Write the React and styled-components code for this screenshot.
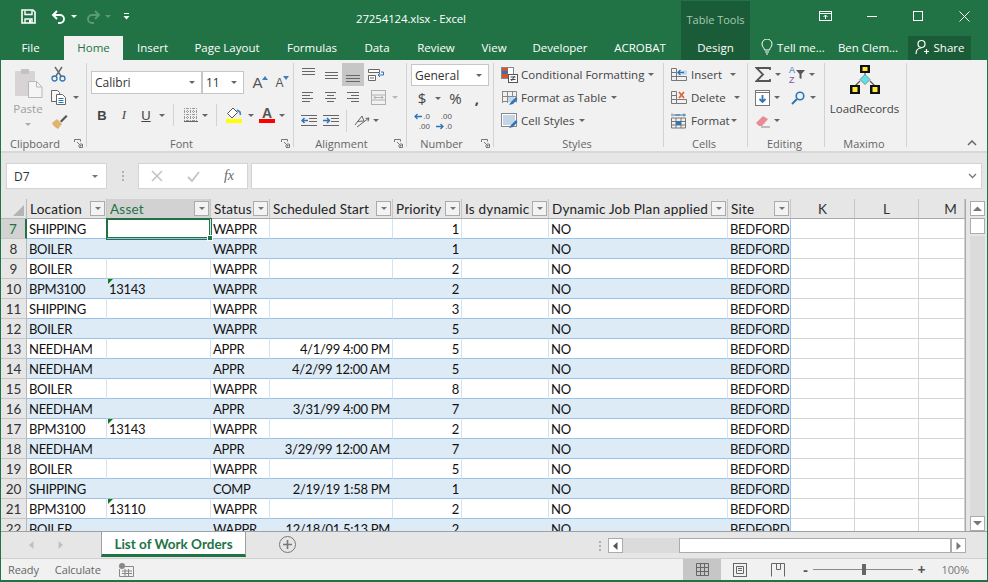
import styled, { createGlobalStyle } from "styled-components";

const GREEN = "#217346";
const COLS = "26px 80px 104px 59px 123px 69px 87px 179px 63px 64px 64px 46px";

const Global = createGlobalStyle`
  html, body { margin: 0; padding: 0; background: #e6e6e6; }
  * { box-sizing: border-box; }
`;

const Win = styled.div`
  width: 988px;
  height: 582px;
  overflow: hidden;
  display: flex;
  flex-direction: column;
  background: ${GREEN};
  border-left: 1px solid ${GREEN};
  border-right: 1px solid ${GREEN};
  border-bottom: 1px solid ${GREEN};
  font-family: "Open Sans", "Noto Sans", sans-serif;
  font-size: 11.5px;
  color: #444;
`;

/* title bar */
const TitleBar = styled.div`
  height: 36px;
  display: flex;
  color: #fff;
`;
const Qat = styled.div`
  width: 355px;
  display: flex;
  align-items: center;
  padding-left: 20px;
  padding-bottom: 3px;
  gap: 4px;
`;
const Title = styled.div`
  width: 325px;
  padding-top: 11px;
  font-size: 11.5px;
  letter-spacing: -0.15px;
`;
const ToolsLabel = styled.div`
  width: 69px;
  margin-top: 1px;
  background: #1b5c38;
  color: #a5c9b4;
  font-size: 11px;
  text-align: center;
  padding-top: 11px;
`;
const WinControls = styled.div`
  margin-left: auto;
  display: flex;
`;
const WinBtn = styled.div`
  width: 46px;
  display: flex;
  align-items: center;
  justify-content: center;
  padding-bottom: 4px;
`;

/* tabs */
const TabBar = styled.div`
  height: 24px;
  display: flex;
  color: #fff;
`;
const Tab = styled.div`
  width: ${(p) => p.$w}px;
  margin-left: ${(p) => p.$ml || 0}px;
  display: flex;
  align-items: center;
  justify-content: center;
  gap: ${(p) => p.$gap || 4}px;
  font-size: 11.5px;
  padding-bottom: 2px;
  padding-right: ${(p) => p.$pr || 0}px;
  background: ${(p) => (p.$active ? "#f1f1f1" : p.$dark ? "#1b5c38" : "transparent")};
  color: ${(p) => (p.$active ? GREEN : "#fff")};
`;

/* ribbon */
const Ribbon = styled.div`
  height: 93px;
  display: flex;
  background: #f1f1f1;
  border-bottom: 2px solid #d8d8d8;
`;
const Group = styled.div`
  width: ${(p) => p.$w}px;
  flex: none;
  display: flex;
  flex-direction: column;
  margin: 3px 0 4px;
  border-right: 1px solid ${(p) => (p.$last ? "transparent" : "#d2d2d2")};
`;
const GroupBody = styled.div`
  height: 73px;
  flex: none;
  display: flex;
  padding-left: ${(p) => p.$pl || 0}px;
  gap: ${(p) => p.$gap || 0}px;
`;
const GroupLabel = styled.div`
  height: 14px;
  flex: none;
  display: flex;
  align-items: center;
  padding-right: 3px;
  color: #666;
  font-size: 11px;
  span { flex: 1; text-align: center; margin-right: ${(p) => (p.$launcher ? 5 : 0)}px; }
`;
const Stack = styled.div`
  width: ${(p) => (p.$w ? `${p.$w}px` : "auto")};
  display: flex;
  flex-direction: column;
  justify-content: ${(p) => p.$justify || "flex-start"};
  align-items: ${(p) => p.$align || "flex-start"};
  gap: ${(p) => p.$gap || 0}px;
  padding-top: ${(p) => p.$pt || 0}px;
`;
const Row = styled.div`
  height: ${(p) => p.$h || 23}px;
  display: flex;
  align-items: center;
  margin-top: ${(p) => p.$mt || 0}px;
  margin-left: ${(p) => p.$ml || 0}px;
`;
const Btn = styled.div`
  width: ${(p) => p.$w || 22}px;
  height: ${(p) => p.$h || 23}px;
  margin-left: ${(p) => p.$ml || 0}px;
  flex: none;
  display: flex;
  align-items: center;
  justify-content: center;
  background: ${(p) => (p.$on ? "#c6c6c6" : "transparent")};
`;
const Caret = styled.i`
  display: block;
  flex: none;
  margin-left: ${(p) => p.$ml || 0}px;
  margin-right: ${(p) => p.$mr || 0}px;
  border-left: 3px solid transparent;
  border-right: 3px solid transparent;
  border-top: 3px solid ${(p) => p.$c || "#666"};
`;
const VSep = styled.div`
  width: 1px;
  height: 22px;
  flex: none;
  margin: 0 ${(p) => p.$m || 5}px;
  background: #d2d2d2;
`;
const Combo = styled.div`
  width: ${(p) => p.$w}px;
  height: ${(p) => p.$h || 23}px;
  flex: none;
  margin-right: ${(p) => p.$mr || 0}px;
  display: flex;
  align-items: center;
  justify-content: space-between;
  padding: 0 6px 0 3px;
  background: #fff;
  border: 1px solid #c6c6c6;
  font-size: 12px;
  color: #333;
`;
const TextBtn = styled.div`
  display: flex;
  align-items: center;
  height: 23px;
  white-space: nowrap;
  color: #444;
  gap: 3px;
`;
const Glyph = styled.span`
  display: block;
  font-size: ${(p) => p.$s || 12}px;
  line-height: ${(p) => (p.$lh ? `${p.$lh}px` : "normal")};
  font-weight: ${(p) => (p.$b ? 700 : 400)};
  font-style: ${(p) => (p.$i ? "italic" : "normal")};
  text-decoration: ${(p) => (p.$u ? "underline" : "none")};
  color: ${(p) => p.$c || "#444"};
  font-family: ${(p) => p.$f || "inherit"};
`;
const GrowMark = styled.div`
  align-self: flex-start;
  margin: 5px 0 0 -1px;
`;
const ColorSwatch = styled.div`
  display: flex;
  flex-direction: column;
  align-items: center;
  width: 16px;
`;
const ColorBar = styled.div`
  width: 16px;
  height: 4px;
  background: ${(p) => p.$c};
`;
const DecWrap = styled.div`
  display: flex;
  flex-direction: column;
  align-items: flex-end;
  gap: 1px;
  font-family: "Liberation Sans", sans-serif;
  font-size: 8px;
  color: #555;
`;
const DecLine = styled.div`
  display: flex;
  align-items: center;
  height: 9px;
  line-height: 9px;
  gap: 1px;
`;
const SortLetters = styled.div`
  display: flex;
  flex-direction: column;
  font-family: "Liberation Sans", sans-serif;
  font-size: 9px;
  line-height: 10px;
  margin-right: 1px;
`;
const SortLetter = styled.span`
  color: ${(p) => p.$c};
`;
const PasteLabel = styled.div`
  color: #a0a0a0;
  margin-top: 3px;
  margin-bottom: 7px;
`;
const BigLabel = styled.div`
  color: #444;
  margin-top: 5px;
`;
const CollapseSlot = styled.div`
  flex: 1;
  display: flex;
  align-items: flex-end;
  justify-content: flex-end;
  padding: 0 10px 5px 0;
`;

/* formula bar */
const FormulaBar = styled.div`
  height: 46px;
  display: flex;
  align-items: flex-start;
  padding: 10px 5px 0 5px;
  background: #e6e6e6;
`;
const NameBox = styled.div`
  width: 101px;
  height: 26px;
  display: flex;
  align-items: center;
  justify-content: space-between;
  padding: 0 8px 0 7px;
  background: #fff;
  border: 1px solid #d4d4d4;
  color: #333;
  font-size: 12px;
`;
const Dots = styled.div`
  width: 31px;
  height: 26px;
  display: flex;
  flex-direction: column;
  align-items: center;
  justify-content: center;
  gap: 2px;
  i { width: 2px; height: 2px; background: #b0b0b0; display: block; }
`;
const FxBox = styled.div`
  width: 110px;
  height: 26px;
  display: flex;
  align-items: center;
  background: #fff;
  border: 1px solid #d4d4d4;
  margin-right: 3px;
`;
const FxBtn = styled.div`
  width: 36px;
  display: flex;
  justify-content: center;
  color: #666;
`;
const FormulaInput = styled.div`
  flex: 1;
  height: 26px;
  display: flex;
  align-items: center;
  justify-content: flex-end;
  padding-right: 4px;
  background: #fff;
  border: 1px solid #d4d4d4;
`;

/* sheet */
const SheetArea = styled.div`
  height: 332px;
  display: flex;
  background: #e6e6e6;
`;
const Sheet = styled.div`
  width: 964px;
  overflow: hidden;
  font-family: Lato, "Liberation Sans", sans-serif;
  font-size: 13px;
  letter-spacing: -0.3px;
  color: #111;
  flex: none;
`;
const SheetRow = styled.div`
  display: grid;
  grid-template-columns: ${COLS};
  height: 20px;
`;
const Corner = styled.div`
  background: #e6e6e6;
  border-right: 1px solid #b8b8b8;
  border-bottom: 1px solid #b8b8b8;
  display: flex;
  align-items: flex-end;
  justify-content: flex-end;
  padding: 0 2px 2px 0;
`;
const HeadCell = styled.div`
  display: flex;
  align-items: center;
  justify-content: ${(p) => (p.$plain ? "center" : "space-between")};
  padding: ${(p) => (p.$plain ? `0 0 0 ${p.$pl || 0}px` : "0 1px 0 3px")};
  background: ${(p) => (p.$sel ? "#d2d2d2" : "#e6e6e6")};
  color: ${(p) => (p.$sel ? GREEN : p.$plain ? "#333" : "#222")};
  border-right: 1px solid #c6c6c6;
  border-bottom: 1px solid #a8a8a8;
  font-size: 13.5px;
  letter-spacing: 0.2px;
  white-space: nowrap;
  overflow: hidden;
`;
const Filter = styled.div`
  width: 15px;
  height: 15px;
  flex: none;
  display: flex;
  align-items: center;
  justify-content: center;
  background: #f3f3f3;
  border: 1px solid #ababab;
`;
const RowHead = styled.div`
  display: flex;
  align-items: center;
  justify-content: center;
  background: ${(p) => (p.$sel ? "#d2d2d2" : "#e6e6e6")};
  color: ${(p) => (p.$sel ? GREEN : "#333")};
  border-right: ${(p) => (p.$sel ? `2px solid ${GREEN}` : "1px solid #b8b8b8")};
  border-bottom: 1px solid #c6c6c6;
  font-size: 13.5px;
  letter-spacing: 0;
`;
const Cell = styled.div`
  position: relative;
  z-index: ${(p) => (p.$sel ? 1 : "auto")};
  display: flex;
  align-items: center;
  justify-content: ${(p) => (p.$right ? "flex-end" : "flex-start")};
  padding: 1px 2px 0 2px;
  white-space: nowrap;
  background: ${(p) => (p.$band ? "#ddebf7" : "#fff")};
  border-bottom: 1px solid #9bc2e6;
  border-right: 1px solid ${(p) => (p.$band && !p.$edge ? "#ddebf7" : p.$edge ? "#9bc2e6" : "#d4e3f1")};
  box-shadow: ${(p) => (p.$sel ? `0 0 0 1px ${GREEN}, inset 0 0 0 1px ${GREEN}` : "none")};
  ${(p) => p.$note && `
    &::before {
      content: "";
      position: absolute;
      left: 1px;
      top: 0;
      border-top: 5px solid #107c10;
      border-right: 5px solid transparent;
    }
  `}
`;
const Handle = styled.div`
  position: absolute;
  right: -3px;
  bottom: -3px;
  width: 6px;
  height: 6px;
  background: ${GREEN};
  border: 1px solid #fff;
`;
const Blank = styled.div`
  background: #fff;
  border-right: 1px solid #d4d4d4;
  border-bottom: 1px solid #d4d4d4;
`;
const VScroll = styled.div`
  flex: 1;
  display: flex;
  flex-direction: column;
  align-items: center;
  padding: 2px 0 0 1px;
  border-left: 1px solid #a8a8a8;
  background: #e6e6e6;
`;
const VTrack = styled.div`
  flex: 1;
  width: 15px;
  margin-top: 2px;
  background: #dbdbdb;
`;
const ScrollBtn = styled.div`
  width: ${(p) => p.$w || 15}px;
  height: ${(p) => p.$h || 15}px;
  flex: none;
  margin-top: ${(p) => p.$mt || 0}px;
  display: flex;
  align-items: center;
  justify-content: center;
  background: #fff;
  border: 1px solid #ababab;
`;

/* sheet tabs */
const SheetBar = styled.div`
  height: 28px;
  display: flex;
  align-items: flex-start;
  background: #e6e6e6;
  border-top: 1px solid #a0a0a0;
  border-bottom: 1px solid #d0d0d0;
`;
const NavArrows = styled.div`
  width: 100px;
  height: 26px;
  display: flex;
  align-items: center;
  padding-left: 27px;
  gap: 22px;
`;
const SheetTab = styled.div`
  width: 145px;
  height: 25px;
  display: flex;
  align-items: center;
  justify-content: center;
  padding-top: 2px;
  background: #fff;
  color: ${GREEN};
  font-family: Lato, "Liberation Sans", sans-serif;
  font-weight: 700;
  font-size: 13.5px;
  border-left: 1px solid #a0a0a0;
  border-right: 1px solid #a0a0a0;
  border-bottom: 3px solid ${GREEN};
`;
const AddSheet = styled.div`
  width: 17px;
  height: 17px;
  margin: 4px 0 0 33px;
  border: 1.5px solid #777;
  border-radius: 50%;
  display: flex;
  align-items: center;
  justify-content: center;
`;
const HScroll = styled.div`
  margin-left: auto;
  margin-right: 21px;
  display: flex;
  align-items: center;
  height: 26px;
  padding-top: 1px;
`;
const GripDots = styled(Dots)`
  width: 16px;
`;
const HTrack = styled.div`
  width: 56px;
  height: 15px;
  background: #dbdbdb;
`;
const HThumb = styled.div`
  width: 272px;
  height: 15px;
  background: #fff;
  border: 1px solid #ababab;
`;

/* status bar */
const StatusBar = styled.div`
  height: 21px;
  display: flex;
  align-items: center;
  padding-left: 7px;
  background: #f1f1f1;
  color: #666;
  font-size: 11px;
  letter-spacing: -0.1px;
  gap: 16px;
`;
const StatusRight = styled.div`
  margin-left: auto;
  height: 100%;
  display: flex;
  align-items: center;
  padding-right: 18px;
`;
const ViewBtn = styled.div`
  width: 38px;
  height: 100%;
  display: flex;
  align-items: center;
  justify-content: center;
  background: ${(p) => (p.$on ? "#c6c6c6" : "transparent")};
`;
const ZoomSlider = styled.div`
  position: relative;
  width: 100px;
  height: 1px;
  margin: 0 4px;
  background: #8a8a8a;
  &::after {
    content: "";
    position: absolute;
    left: 49px;
    top: -5px;
    width: 4px;
    height: 11px;
    background: #666;
  }
`;
const ZoomMark = styled.div`
  width: 8px;
  text-align: center;
  font-weight: 700;
  color: #555;
  font-size: 14px;
  line-height: 14px;
  margin-left: ${(p) => p.$ml || 0}px;
`;
const ZoomPct = styled.div`
  margin-left: 16px;
  color: #777;
`;

/* icons */
const Ico = ({ w = 16, h = 16, children }) => (
  <svg width={w} height={h} viewBox={`0 0 ${w} ${h}`} fill="none" style={{ display: "block", flex: "none" }}>
    {children}
  </svg>
);

const Lines = ({ rows, c = "#666", w = 16, h = 16 }) => (
  <Ico w={w} h={h}>
    {rows.map(([x1, x2, y], i) => (
      <path key={i} d={`M${x1} ${y + 0.5}H${x2}`} stroke={c} />
    ))}
  </Ico>
);

const SaveIcon = () => (
  <Ico w={15} h={15}>
    <path d="M1 1h11l2 2v11H1z" stroke="#fff" strokeWidth="1.6" />
    <path d="M4 1.5v4h7v-4" stroke="#fff" strokeWidth="1.4" />
    <path d="M4 14v-4h7v4" stroke="#fff" strokeWidth="1.4" />
    <rect x="8" y="11" width="2" height="3" fill="#fff" />
  </Ico>
);
const UndoIcon = ({ flip, c = "#fff" }) => (
  <Ico w={16} h={14}>
    <g transform={flip ? "matrix(-1 0 0 1 16 0)" : undefined}>
      <path d="M6 1L2 5l4 4M2 5h7a4 4 0 0 1 0 8H7" stroke={c} strokeWidth="1.9" />
    </g>
  </Ico>
);
const QatMore = () => (
  <Ico w={7} h={7}>
    <path d="M1 .5h5" stroke="#fff" />
    <path d="M0.5 3h6L3.5 6.5z" fill="#fff" />
  </Ico>
);
const RestoreRibbon = () => (
  <Ico w={14} h={11}>
    <rect x=".5" y=".5" width="12" height="9" stroke="#fff" />
    <path d="M.5 2.5h12" stroke="#fff" />
    <path d="M6.5 8V4M4.5 6l2-2 2 2" stroke="#fff" />
  </Ico>
);
const MinIcon = () => <Ico w={10} h={10}><path d="M0 5.5h10" stroke="#fff" /></Ico>;
const MaxIcon = () => <Ico w={10} h={10}><rect x=".5" y=".5" width="9" height="9" stroke="#fff" /></Ico>;
const CloseIcon = () => <Ico w={11} h={11}><path d="M.5.5l10 10M10.5.5l-10 10" stroke="#fff" /></Ico>;
const BulbIcon = () => (
  <Ico w={12} h={16}>
    <path d="M3.5 11c0-2-2.5-3-2.5-6a5 5 0 0 1 10 0c0 3-2.5 4-2.5 6z" stroke="#fff" />
    <path d="M4 13h4M5 15h2" stroke="#fff" />
  </Ico>
);
const PersonIcon = () => (
  <Ico w={15} h={16}>
    <circle cx="6.5" cy="5" r="3.5" stroke="#fff" strokeWidth="1.2" />
    <path d="M1 15c0-3.5 2-6 5.5-6M11.5 10v5M9 12.5h5" stroke="#fff" strokeWidth="1.2" />
  </Ico>
);
const PasteIcon = () => (
  <Ico w={29} h={30}>
    <rect x="1" y="3" width="20" height="25" rx="1" fill="#d8d4d6" />
    <rect x="7" y="1" width="8" height="5" fill="#c6c2c4" />
    <path d="M14.5 13.5h8l5.5 5.5v10.5h-13.5z" fill="#f5f5f5" stroke="#b8b8b8" />
    <path d="M22.5 13.5v5.5h5.5" stroke="#b8b8b8" />
  </Ico>
);
const CutIcon = () => (
  <Ico w={15} h={16}>
    <path d="M4 1l6 9M11 1L5 10" stroke="#666" strokeWidth="1.4" />
    <circle cx="3.5" cy="12.5" r="2.5" stroke="#2f75b5" strokeWidth="1.3" />
    <circle cx="11.5" cy="12.5" r="2.5" stroke="#2f75b5" strokeWidth="1.3" />
  </Ico>
);
const CopyIcon = () => (
  <Ico w={15} h={15}>
    <path d="M.5.5h6l2 2v9h-8z" fill="#f8f8f8" stroke="#666" />
    <path d="M5.5 4.5h6l3 3v7h-9z" fill="#fff" stroke="#666" />
    <path d="M7.5 8.5h5M7.5 10.5h5M7.5 12.5h5" stroke="#2f75b5" />
  </Ico>
);
const BrushIcon = () => (
  <Ico w={17} h={16}>
    <path d="M9 8L15 2l1.5 1.5-6 6z" fill="#555" />
    <path d="M1 10l5-4 5 5-4 5C5 15 2 13 1 10z" fill="#e2b36e" />
  </Ico>
);
const GrowTri = ({ up }) => (
  <Ico w={6} h={4}>
    <path d={up ? "M0 4l3-4 3 4z" : "M0 0h6L3 4z"} fill="#3f7fbf" />
  </Ico>
);
const BorderIcon = () => (
  <Ico w={14} h={14}>
    {[0, 3, 6, 9, 12].map((v) => (
      <path key={v} d={`M${v + 0.5} 0v13M0 ${v + 0.5}h13`} stroke="#999" strokeDasharray="1 1" />
    ))}
    <path d="M0 13.5h14" stroke="#666" />
  </Ico>
);
const FillIcon = () => (
  <Ico w={17} h={16}>
    <path d="M7 1L1.5 6.5 6 11l5.5-5.5z" fill="#fff" stroke="#555" />
    <path d="M11 3l3 2 .5 3" stroke="#3f7fbf" strokeWidth="1.6" />
    <rect x="0" y="12" width="16" height="4" fill="#ffff00" />
  </Ico>
);
const WrapIcon = () => (
  <Ico w={17} h={16}>
    <path d="M.5 2.5h11v3h-11zM.5 8.5h7v5h-7z" fill="#fff" stroke="#666" />
    <path d="M13 5h2.5v3H10M12 6l-2 2 2 2" stroke="#2f75b5" />
    <path d="M2 11h4" stroke="#666" />
  </Ico>
);
const MergeIcon = () => (
  <Ico w={15} h={15}>
    <rect x=".5" y=".5" width="14" height="14" stroke="#b0b0b0" />
    <path d="M.5 5h14M.5 10h14M3 7.500h9M3 7.500l1.500-1.500M3 7.500l1.500 1.500M12 7.500l-1.500-1.500M12 7.500l-1.500 1.500" stroke="#b0b0b0" />
  </Ico>
);
const IndentIcon = ({ right }) => (
  <Ico w={16} h={12}>
    <path d="M0 .5h16M8 3.500h8M8 6.500h8M0 10.500h16" stroke="#666" />
    <path d={right ? "M0 5.500h6M4 3l2.500 2.500L4 8" : "M7 5.500H1M3.500 3L1 5.500 3.500 8"} stroke="#2f75b5" strokeWidth="1.5" />
  </Ico>
);
const OrientIcon = () => (
  <Ico w={16} h={16}>
    <path d="M1 12L8 3l2 5-7 .5M3 14L15 5M15 5l-3.500.5M15 5l-1 3.500" stroke="#666" />
  </Ico>
);
const DecArrow = ({ right }) => (
  <Ico w={8} h={7}>
    <path d={right ? "M0 3.500h7M4.500 1L7 3.500 4.500 6" : "M8 3.500H1M3.500 1L1 3.500 3.500 6"} stroke="#2f75b5" strokeWidth="1.3" />
  </Ico>
);
const DecLess = () => (
  <DecWrap>
    <DecLine><DecArrow />.0</DecLine>
    <DecLine>.00</DecLine>
  </DecWrap>
);
const DecMore = () => (
  <DecWrap>
    <DecLine>.00</DecLine>
    <DecLine><DecArrow right />.0</DecLine>
  </DecWrap>
);
const TableGrid = ({ accent }) => (
  <>
    {[1, 6, 11].map((v) => (
      <path key={v} d={`M${v + 0.5} 1v12M1 ${v + 0.5}h14`} stroke="#888" />
    ))}
    <path d="M1.500 1.500h14v11" stroke="#888" />
    {accent}
  </>
);
const CondIcon = () => (
  <Ico w={17} h={16}>
    <rect x=".5" y=".5" width="12" height="11" fill="#fff" stroke="#888" />
    <rect x="1" y="1" width="6" height="3" fill="#d9542b" />
    <rect x="1" y="4" width="6" height="3" fill="#2f75b5" />
    <rect x="1" y="7" width="6" height="4" fill="#d9542b" />
    <rect x="7.500" y="7.500" width="9" height="8" fill="#fff" stroke="#555" />
    <path d="M9.500 10h5M9.500 12.500h5M13.500 9l-3 5" stroke="#444" />
  </Ico>
);
const FormatTableIcon = () => (
  <Ico w={17} h={16}>
    <TableGrid accent={<rect x="7" y="7" width="6" height="5" fill="#bdd7ee" />} />
    <path d="M15 7l-5 5-2 3 4-1 4.500-5z" fill="#2f75b5" />
  </Ico>
);
const CellStyleIcon = () => (
  <Ico w={17} h={16}>
    <rect x=".5" y=".5" width="15" height="13" fill="#fff" stroke="#888" />
    <rect x="2" y="2" width="12" height="10" fill="#c3d6e8" />
    <path d="M15 7l-5 5-2 3 4-1 4.500-5z" fill="#2f75b5" />
  </Ico>
);
const CellsIcon = ({ kind }) => (
  <Ico w={17} h={16}>
    <path d="M.5 1.500h5v4h-5zM.5 5.500h5v4h-5zM.5 9.500h5v4h-5zM5.500 9.500h10v4h-10z" stroke="#777" />
    {kind === "insert" && <rect x="11" y="3.500" width="5" height="4" fill="#bdd7ee" />}
    {kind === "insert" && <path d="M13 5.500H7M9.500 3L7 5.500 9.500 8" stroke="#2f75b5" strokeWidth="1.5" />}
    {kind === "delete" && <path d="M8 2l5 6M13 2L8 8" stroke="#e0603a" strokeWidth="1.7" />}
  </Ico>
);
const FormatIcon = () => (
  <Ico w={17} h={16}>
    <path d="M1 .5v3M4.500 2H9M13 .5v3M.5 5h14v10h-14zM.5 8.500h14M.5 12h14M5 5v10M10 5v10" stroke="#777" />
    <rect x="5" y="8" width="5" height="4" fill="#2f75b5" />
    <path d="M2 2h13" stroke="#2f75b5" />
  </Ico>
);
const SigmaIcon = () => (
  <Ico w={16} h={15}>
    <path d="M15 3V1H1.500L8 7.500 1.500 14H15v-2" stroke="#555" strokeWidth="1.8" />
  </Ico>
);
const FunnelIcon = () => (
  <Ico w={9} h={9}>
    <path d="M0 0h9L5.500 4v5l-2-1V4z" fill="#555" />
  </Ico>
);
const FillDownIcon = () => (
  <Ico w={15} h={16}>
    <rect x=".5" y=".5" width="14" height="15" fill="#fff" stroke="#777" />
    <path d="M.5 2.500h14" stroke="#777" />
    <path d="M7.500 5v7M4.500 9l3 3 3-3" stroke="#2f75b5" strokeWidth="1.8" />
  </Ico>
);
const FindIcon = () => (
  <Ico w={14} h={14}>
    <circle cx="9" cy="5" r="3.800" stroke="#2f75b5" strokeWidth="1.6" />
    <path d="M6 8l-5 5" stroke="#2f75b5" strokeWidth="2" />
  </Ico>
);
const EraserIcon = () => (
  <Ico w={16} h={14}>
    <path d="M1 9l7-7 5 3-6 7H4z" fill="#e98a95" />
    <path d="M6 13h9" stroke="#888" />
  </Ico>
);
const FlowIcon = () => (
  <Ico w={32} h={32}>
    <path d="M16 9v5M11 17l-5 5M21 17l5 5" stroke="#555" strokeWidth="1.2" />
    <rect x="11" y="1" width="10" height="8" fill="#111" />
    <rect x="13.500" y="3" width="5" height="4" fill="#ffeb3b" />
    <rect x="1" y="21" width="10" height="9" fill="#111" />
    <rect x="3.500" y="23" width="5" height="5" fill="#ffeb3b" />
    <rect x="21" y="21" width="10" height="9" fill="#111" />
    <rect x="23.500" y="23" width="5" height="5" fill="#ffeb3b" />
    <path d="M16 10.500l5 5-5 5-5-5z" fill="#5ce3ea" stroke="#7a8c8c" />
  </Ico>
);
const Launcher = () => (
  <Ico w={9} h={9}>
    <path d="M8.500 5v3.500H5M.5 3V.5h6v2" stroke="#777" />
    <path d="M3 3l4 4M4 7h3V4" stroke="#777" />
  </Ico>
);
const CollapseIcon = () => <Ico w={10} h={6}><path d="M1 5l4-4 4 4" stroke="#666" strokeWidth="1.5" /></Ico>;
const Chevron = () => <Ico w={9} h={6}><path d="M1 1l3.500 3.500L8 1" stroke="#777" strokeWidth="1.3" /></Ico>;
const XMark = () => <Ico w={12} h={12}><path d="M1 1l10 10M11 1L1 11" stroke="#c4c4c4" strokeWidth="1.6" /></Ico>;
const CheckMark = () => <Ico w={13} h={11}><path d="M1 6l4 4 7-9" stroke="#c4c4c4" strokeWidth="1.8" /></Ico>;
const CornerTri = () => <Ico w={11} h={11}><path d="M11 0v11H0z" fill="#b4b4b4" /></Ico>;
const Arrow = ({ dir, c = "#555" }) => (
  <Ico w={7} h={8}>
    <path d={dir === "left" ? "M5.500 0v8L1 4z" : "M1.500 0v8L6 4z"} fill={c} />
  </Ico>
);
const ArrowV = ({ up }) => (
  <Ico w={9} h={5}>
    <path d={up ? "M0 5l4.500-4.500L9 5z" : "M0 0l4.500 4.500L9 0z"} fill="#777" />
  </Ico>
);
const PlusIcon = () => <Ico w={9} h={9}><path d="M4.500 0v9M0 4.500h9" stroke="#777" strokeWidth="1.6" /></Ico>;
const MacroIcon = () => (
  <Ico w={15} h={14}>
    <circle cx="3" cy="3" r="3" fill="#888" />
    <path d="M5 3.500h9.500v10H.5V6" stroke="#888" />
    <path d="M3 8h10M3 10.500h10M6 6v7M9.500 6v7" stroke="#888" />
  </Ico>
);
const NormalView = () => (
  <Ico w={13} h={13}>
    <path d="M.5.5h12v12H.5zM.5 4.500h12M.5 8.500h12M4.500.5v12M8.500.5v12" stroke="#666" />
  </Ico>
);
const PageView = () => (
  <Ico w={14} h={14}>
    <rect x=".5" y=".5" width="13" height="13" stroke="#666" />
    <path d="M3.500 3.500h7v7h-7zM5 5.500h4M5 7.500h4" stroke="#666" />
  </Ico>
);
const BreakView = () => (
  <Ico w={14} h={14}>
    <path d="M.5 13.500V.5h13v13M5.500.5v6h4V.5" stroke="#666" />
  </Ico>
);

const RULES = [
  ["SHIPPING", "", "WAPPR", "", 1],
  ["BOILER", "", "WAPPR", "", 1],
  ["BOILER", "", "WAPPR", "", 2],
  ["BPM3100", "13143", "WAPPR", "", 2],
  ["SHIPPING", "", "WAPPR", "", 3],
  ["BOILER", "", "WAPPR", "", 5],
  ["NEEDHAM", "", "APPR", "4/1/99 4:00 PM", 5],
  ["NEEDHAM", "", "APPR", "4/2/99 12:00 AM", 5],
  ["BOILER", "", "WAPPR", "", 8],
  ["NEEDHAM", "", "APPR", "3/31/99 4:00 PM", 7],
  ["BPM3100", "13143", "WAPPR", "", 2],
  ["NEEDHAM", "", "APPR", "3/29/99 12:00 AM", 7],
  ["BOILER", "", "WAPPR", "", 5],
  ["SHIPPING", "", "COMP", "2/19/19 1:58 PM", 1],
  ["BPM3100", "13110", "WAPPR", "", 2],
  ["BOILER", "", "WAPPR", "12/18/01 5:13 PM", 2],
];

const HEADERS = ["Location", "Asset", "Status", "Scheduled Start", "Priority", "Is dynamic", "Dynamic Job Plan applied", "Site"];

const left = [[1, 12, 2], [1, 9, 5], [1, 12, 8], [1, 9, 11]];
const center = [[2, 13, 2], [4, 11, 5], [2, 13, 8], [4, 11, 11]];
const rightA = [[2, 14, 2], [6, 14, 5], [2, 14, 8], [6, 14, 11]];
const top = [[1, 14, 1], [1, 14, 4], [1, 14, 7]];
const mid = [[2, 15, 5], [2, 15, 8], [2, 15, 11]];
const bot = [[1, 15, 8], [1, 15, 11], [1, 15, 14]];

function App() {
  return (
    <Win>
      <Global />
      <TitleBar>
        <Qat>
          <SaveIcon />
          <Btn $w={7} />
          <UndoIcon />
          <Caret $c="#fff" $mr={4} />
          <UndoIcon flip c="#5d9a78" />
          <Caret $c="#5d9a78" $mr={8} />
          <QatMore />
        </Qat>
        <Title>27254124.xlsx - Excel</Title>
        <ToolsLabel>Table Tools</ToolsLabel>
        <WinControls>
          <WinBtn><RestoreRibbon /></WinBtn>
          <WinBtn><MinIcon /></WinBtn>
          <WinBtn><MaxIcon /></WinBtn>
          <WinBtn><CloseIcon /></WinBtn>
        </WinControls>
      </TitleBar>

      <TabBar>
        <Tab $w={63} $pr={4}>File</Tab>
        <Tab $w={59} $active>Home</Tab>
        <Tab $w={59}>Insert</Tab>
        <Tab $w={90}>Page Layout</Tab>
        <Tab $w={80}>Formulas</Tab>
        <Tab $w={50}>Data</Tab>
        <Tab $w={68}>Review</Tab>
        <Tab $w={48}>View</Tab>
        <Tab $w={84}>Developer</Tab>
        <Tab $w={76}>ACROBAT</Tab>
        <Tab $w={69} $ml={3} $dark>Design</Tab>
        <Tab $w={76} $ml={5}><BulbIcon />Tell me...</Tab>
        <Tab $w={74}>Ben Clem...</Tab>
        <Tab $w={63} $ml={3} $dark>
          <PersonIcon />
          Share
        </Tab>
      </TabBar>

      <Ribbon>
        <Group $w={86}>
          <GroupBody $pl={12}>
            <Stack $w={30} $align="center" $pt={5}>
              <PasteIcon />
              <PasteLabel>Paste</PasteLabel>
              <Caret $c="#aaa" />
            </Stack>
            <Stack $pt={2} $gap={7}>
              <Row $h={17} $ml={8}><CutIcon /></Row>
              <Row $h={16} $ml={8}><CopyIcon /><Caret $ml={7} /></Row>
              <Row $h={17} $ml={8}><BrushIcon /></Row>
            </Stack>
          </GroupBody>
          <GroupLabel $launcher><span>Clipboard</span><Launcher /></GroupLabel>
        </Group>

        <Group $w={207}>
          <GroupBody $pl={4}>
            <Stack $pt={8}>
              <Row>
                <Combo $w={111}>Calibri<Caret /></Combo>
                <Combo $w={42} $mr={5}>11<Caret /></Combo>
                <Btn $w={22}>
                  <Glyph $s={15} $c="#555" $f='"Liberation Sans", sans-serif'>A</Glyph>
                  <GrowMark><GrowTri up /></GrowMark>
                </Btn>
                <Btn $w={22}>
                  <Glyph $s={12} $c="#555" $f='"Liberation Sans", sans-serif'>A</Glyph>
                  <GrowMark><GrowTri /></GrowMark>
                </Btn>
              </Row>
              <Row $h={22} $mt={10}>
                <Btn $w={22}><Glyph $b $s={13} $f='"Liberation Sans", sans-serif'>B</Glyph></Btn>
                <Btn $w={22}><Glyph $i $s={13} $f='"Liberation Serif", serif'>I</Glyph></Btn>
                <Btn $w={22}><Glyph $u $s={13} $f='"Liberation Sans", sans-serif'>U</Glyph></Btn>
                <Caret $ml={2} />
                <VSep $m={8} />
                <Btn $w={18}><BorderIcon /></Btn>
                <Caret $ml={2} />
                <VSep $m={8} />
                <Btn $w={18}><FillIcon /></Btn>
                <Caret $ml={5} />
                <Btn $w={20} $ml={3}>
                  <ColorSwatch>
                    <Glyph $b $s={14} $lh={12} $c="#555" $f='"Liberation Sans", sans-serif'>A</Glyph>
                    <ColorBar $c="#f00" />
                  </ColorSwatch>
                </Btn>
                <Caret $ml={2} />
              </Row>
            </Stack>
          </GroupBody>
          <GroupLabel $launcher><span>Font</span><Launcher /></GroupLabel>
        </Group>

        <Group $w={113}>
          <GroupBody $pl={4}>
            <Stack>
              <Row>
                <Btn><Lines rows={top} /></Btn>
                <Btn><Lines rows={mid} /></Btn>
                <Btn $on><Lines rows={bot} /></Btn>
                <Btn $w={24}><WrapIcon /></Btn>
              </Row>
              <Row>
                <Btn><Lines rows={left} /></Btn>
                <Btn><Lines rows={center} /></Btn>
                <Btn><Lines rows={rightA} /></Btn>
                <Btn $w={28}><MergeIcon /></Btn>
                <Caret $c="#b8b8b8" />
              </Row>
              <Row>
                <Btn><IndentIcon /></Btn>
                <Btn><IndentIcon right /></Btn>
                <VSep $m={4} />
                <Btn><OrientIcon /></Btn>
                <Caret />
              </Row>
            </Stack>
          </GroupBody>
          <GroupLabel $launcher><span>Alignment</span><Launcher /></GroupLabel>
        </Group>

        <Group $w={87}>
          <GroupBody $pl={4}>
            <Stack $pt={1}>
              <Row $h={22}><Combo $w={78} $h={22}>General<Caret /></Combo></Row>
              <Row $h={24}>
                <Btn $w={22}><Glyph $s={15}>$</Glyph></Btn>
                <Caret $ml={2} />
                <Btn $w={27} $ml={1}><Glyph $s={15}>%</Glyph></Btn>
                <Btn $w={16}><Glyph $s={15} $b>,</Glyph></Btn>
              </Row>
              <Row>
                <Btn><DecLess /></Btn>
                <Btn><DecMore /></Btn>
              </Row>
            </Stack>
          </GroupBody>
          <GroupLabel $launcher><span>Number</span><Launcher /></GroupLabel>
        </Group>

        <Group $w={170}>
          <GroupBody $pl={7}>
            <Stack>
              <TextBtn><CondIcon />Conditional Formatting<Caret $ml={1} /></TextBtn>
              <TextBtn><FormatTableIcon />Format as Table<Caret $ml={1} /></TextBtn>
              <TextBtn><CellStyleIcon />Cell Styles<Caret $ml={1} /></TextBtn>
            </Stack>
          </GroupBody>
          <GroupLabel><span>Styles</span></GroupLabel>
        </Group>

        <Group $w={84}>
          <GroupBody $pl={7}>
            <Stack>
              <TextBtn><CellsIcon kind="insert" />Insert<Caret $ml={5} /></TextBtn>
              <TextBtn><CellsIcon kind="delete" />Delete<Caret $ml={5} /></TextBtn>
              <TextBtn><FormatIcon />Format<Caret $ml={-2} /></TextBtn>
            </Stack>
          </GroupBody>
          <GroupLabel><span>Cells</span></GroupLabel>
        </Group>

        <Group $w={77}>
          <GroupBody $pl={6}>
            <Stack>
              <Row>
                <Btn $w={17}><SigmaIcon /></Btn>
                <Caret $ml={4} $mr={7} />
                <Btn $w={18}>
                  <SortLetters>
                    <SortLetter $c="#2f75b5">A</SortLetter>
                    <SortLetter $c="#7f4fb0">Z</SortLetter>
                  </SortLetters>
                  <FunnelIcon />
                </Btn>
                <Caret $ml={3} />
              </Row>
              <Row>
                <Btn $w={17}><FillDownIcon /></Btn>
                <Caret $ml={3} $mr={9} />
                <Btn $w={17}><FindIcon /></Btn>
                <Caret $ml={4} />
              </Row>
              <Row>
                <Btn $w={17}><EraserIcon /></Btn>
                <Caret $ml={3} />
              </Row>
            </Stack>
          </GroupBody>
          <GroupLabel><span>Editing</span></GroupLabel>
        </Group>

        <Group $w={82}>
          <GroupBody>
            <Stack $w={79} $align="center" $pt={1}>
              <FlowIcon />
              <BigLabel>LoadRecords</BigLabel>
            </Stack>
          </GroupBody>
          <GroupLabel><span>Maximo</span></GroupLabel>
        </Group>

        <CollapseSlot><CollapseIcon /></CollapseSlot>
      </Ribbon>

      <FormulaBar>
        <NameBox>D7<Caret $c="#777" /></NameBox>
        <Dots><i /><i /><i /></Dots>
        <FxBox>
          <FxBtn><XMark /></FxBtn>
          <FxBtn><CheckMark /></FxBtn>
          <FxBtn><Glyph $i $s={14} $c="#666" $f='"Liberation Serif", serif'>fx</Glyph></FxBtn>
        </FxBox>
        <FormulaInput><Chevron /></FormulaInput>
      </FormulaBar>

      <SheetArea>
        <Sheet>
          <SheetRow>
            <Corner><CornerTri /></Corner>
            {HEADERS.map((h, i) => (
              <HeadCell key={h} $sel={i === 1}>
                {h}
                <Filter><Caret $c="#777" /></Filter>
              </HeadCell>
            ))}
            <HeadCell $plain>K</HeadCell>
            <HeadCell $plain>L</HeadCell>
            <HeadCell $plain $pl={18}>M</HeadCell>
          </SheetRow>
          {RULES.map((r, i) => {
            const band = i % 2 === 1;
            return (
              <SheetRow key={i}>
                <RowHead $sel={i === 0}>{i + 7}</RowHead>
                <Cell $band={band}>{r[0]}</Cell>
                <Cell $band={band} $note={!!r[1]} $sel={i === 0}>
                  {r[1]}
                  {i === 0 && <Handle />}
                </Cell>
                <Cell $band={band}>{r[2]}</Cell>
                <Cell $band={band} $right>{r[3]}</Cell>
                <Cell $band={band} $right>{r[4]}</Cell>
                <Cell $band={band} />
                <Cell $band={band}>NO</Cell>
                <Cell $band={band} $edge>BEDFORD</Cell>
                <Blank />
                <Blank />
                <Blank />
              </SheetRow>
            );
          })}
        </Sheet>
        <VScroll>
          <ScrollBtn><ArrowV up /></ScrollBtn>
          <ScrollBtn $h={16} $mt={2} />
          <VTrack />
          <ScrollBtn><ArrowV /></ScrollBtn>
        </VScroll>
      </SheetArea>

      <SheetBar>
        <NavArrows>
          <Arrow dir="left" c="#c0c0c0" />
          <Arrow dir="right" c="#c0c0c0" />
        </NavArrows>
        <SheetTab>List of Work Orders</SheetTab>
        <AddSheet><PlusIcon /></AddSheet>
        <HScroll>
          <GripDots><i /><i /><i /></GripDots>
          <ScrollBtn><Arrow dir="left" /></ScrollBtn>
          <HTrack />
          <HThumb />
          <ScrollBtn><Arrow dir="right" c="#777" /></ScrollBtn>
        </HScroll>
      </SheetBar>

      <StatusBar>
        <span>Ready</span>
        <span>Calculate</span>
        <Btn $w={20} $h={16}><MacroIcon /></Btn>
        <StatusRight>
          <ViewBtn $on><NormalView /></ViewBtn>
          <ViewBtn><PageView /></ViewBtn>
          <ViewBtn><BreakView /></ViewBtn>
          <ZoomMark $ml={4}>-</ZoomMark>
          <ZoomSlider />
          <ZoomMark>+</ZoomMark>
          <ZoomPct>100%</ZoomPct>
        </StatusRight>
      </StatusBar>
    </Win>
  );
}

export default App;
